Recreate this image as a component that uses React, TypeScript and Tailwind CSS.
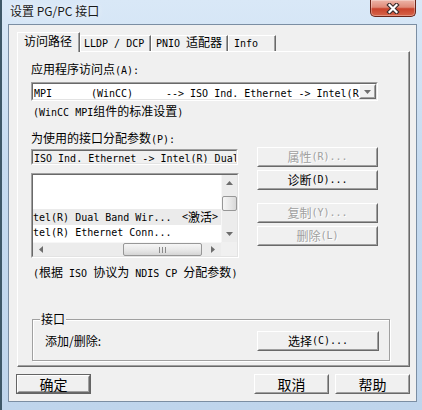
import React from "react";

const CJK = /[\u2E80-\u9FFF\uFF00-\uFFEF\u3000-\u303F]/;

function T({ s }: { s: string }) {
  const parts = s.split(/([\u2E80-\u9FFF\uFF00-\uFFEF\u3000-\u303F]+)/).filter(Boolean);
  return (
    <>
      {parts.map((p, i) =>
        CJK.test(p) ? (
          <span key={i} className="font-['Noto_Sans_CJK_SC',sans-serif] text-[12px]">
            {p}
          </span>
        ) : (
          <span key={i} className="font-['DejaVu_Sans_Mono',monospace] text-[10px] whitespace-pre">
            {p}
          </span>
        )
      )}
    </>
  );
}

function Btn({
  children,
  className = "",
  disabled = false,
  def = false,
}: {
  children: React.ReactNode;
  className?: string;
  disabled?: boolean;
  def?: boolean;
}) {
  const body = (
    <div className="h-full w-full border border-t-white border-l-white border-r-[#696969] border-b-[#696969]">
      <div
        className={
          "h-full w-full border border-t-[#f0f0f0] border-l-[#f0f0f0] border-r-[#a0a0a0] border-b-[#a0a0a0] flex items-center justify-center bg-[#f0f0f0] " +
          (disabled ? "text-[#a0a0a0] [text-shadow:1px_1px_0_#ffffff]" : "text-black")
        }
      >
        {children}
      </div>
    </div>
  );
  if (def) {
    return <div className={"border border-[#646464] " + className}>{body}</div>;
  }
  return <div className={className}>{body}</div>;
}

function Sunken({ className = "", innerClass = "", children }: { className?: string; innerClass?: string; children?: React.ReactNode }) {
  return (
    <div className={"border border-t-[#a0a0a0] border-l-[#a0a0a0] border-r-white border-b-white " + className}>
      <div className={"h-full w-full border border-t-[#696969] border-l-[#696969] border-r-[#e3e3e3] border-b-[#e3e3e3] " + innerClass}>
        {children}
      </div>
    </div>
  );
}

function Arrow({ dir }: { dir: "up" | "down" | "left" | "right" }) {
  const pts =
    dir === "up"
      ? "0,4 7,4 3.5,0"
      : dir === "down"
      ? "0,0 7,0 3.5,4"
      : dir === "left"
      ? "4,0 4,7 0,3.5"
      : "0,0 0,7 4,3.5";
  const w = dir === "up" || dir === "down" ? 7 : 4;
  const h = dir === "up" || dir === "down" ? 4 : 7;
  return (
    <svg width={w} height={h} viewBox={`0 0 ${w} ${h}`}>
      <polygon points={pts} fill="#6d6d6d" />
    </svg>
  );
}

export default function App() {
  return (
    <div className="w-[422px] h-[410px] overflow-hidden border-l-2 border-l-[#3e5868] bg-[linear-gradient(180deg,#d9e8f7_0%,#c6dbf0_40%,#bfd5ec_100%)] flex flex-col font-['Noto_Sans_CJK_SC',sans-serif] text-[12px] leading-[14px] text-black">
      {/* Title bar */}
      <div className="h-[24px] flex items-start shrink-0">
        <div className="ml-[8px] mt-[3px] text-[12px] leading-[16px] text-[#1a1a1a] [text-shadow:0_0_6px_#ffffff]">
          设置 PG/PC 接口
        </div>
        <div className="ml-auto mr-[6px] w-[46px] h-[17px] rounded-b-[5px] border border-t-0 border-[#6a2418] bg-[linear-gradient(180deg,#edb5a8_0%,#df8a78_45%,#c9432c_55%,#d7654a_100%)] shadow-[inset_0_0_0_1px_rgba(255,255,255,0.3)] flex items-center justify-center">
          <svg width="14" height="11" viewBox="0 0 14 11">
            <path d="M3.5 2 L10.5 9 M10.5 2 L3.5 9" stroke="#3b2b2b" strokeWidth="4.4" strokeLinecap="square" />
            <path d="M3.5 2 L10.5 9 M10.5 2 L3.5 9" stroke="#ffffff" strokeWidth="2.2" strokeLinecap="square" />
          </svg>
        </div>
      </div>

      {/* Client area */}
      <div className="ml-[6px] mr-[5px] h-[378px] shrink-0 border border-[#7b8ea3] bg-[#f0f0f0] flex flex-col">
        <div className="ml-[8px] mr-[6px] mt-[7px] flex flex-col">
          {/* Tabs */}
          <div className="flex items-end h-[19px]">
            <div className="relative z-10 -mb-[1px] w-[63px] h-[20px] bg-[#f0f0f0] border-t border-l border-t-white border-l-white border-r border-r-[#696969] shadow-[inset_-1px_0_0_#a0a0a0] pl-[6px] pt-[2px] leading-[12px]">
              访问路径
            </div>
            <div className="w-[71px] h-[16px] border-t border-l border-t-white border-l-white border-r border-r-[#696969] shadow-[inset_-1px_0_0_#a0a0a0] pl-[3px] leading-[12px]">
              <T s="LLDP / DCP" />
            </div>
            <div className="w-[77px] h-[16px] border-t border-l border-t-white border-l-white border-r border-r-[#696969] shadow-[inset_-1px_0_0_#a0a0a0] pl-[4px] leading-[12px]">
              <T s="PNIO 适配器" />
            </div>
            <div className="w-[48px] h-[16px] border-t border-l border-t-white border-l-white border-r border-r-[#696969] shadow-[inset_-1px_0_0_#a0a0a0] pl-[5px] leading-[12px]">
              <T s="Info" />
            </div>
          </div>

          {/* Panel */}
          <div className="h-[316px] border-t border-l border-t-white border-l-white border-r border-b border-r-[#696969] border-b-[#696969] shadow-[inset_-1px_-1px_0_#a0a0a0] pl-[13px] flex flex-col">
            <div className="mt-[10px]">
              <T s="应用程序访问点(A):" />
            </div>
            <Sunken className="mt-[4px] w-[347px] h-[19px] bg-white" innerClass="flex">
              <div className="flex-1 overflow-hidden whitespace-nowrap pl-[1px] leading-[15px] flex">
                <span className="w-[57px] shrink-0">
                  <T s="MPI" />
                </span>
                <span className="w-[75px] shrink-0">
                  <T s="(WinCC)" />
                </span>
                <span className="shrink-0">
                  <T s="--> ISO Ind. Ethernet -> Intel(R) Dual Band Wireless" />
                </span>
              </div>
              <Btn className="w-[17px] h-full shrink-0">
                <Arrow dir="down" />
              </Btn>
            </Sunken>
            <div className="mt-[3px] ml-[2px]">
              <T s="(WinCC MPI组件的标准设置)" />
            </div>
            <div className="mt-[11px]">
              <T s="为使用的接口分配参数(P):" />
            </div>

            <div className="flex">
              <div className="flex flex-col w-[208px] pt-[2px]">
                <Sunken className="w-[207px] h-[16px] bg-[#f0f0f0]" innerClass="overflow-hidden whitespace-nowrap pl-[1px] leading-[12px]">
                  <T s="ISO Ind. Ethernet -> Intel(R) Dual Band Wireless" />
                </Sunken>
                <Sunken className="mt-[8px] w-[208px] h-[85px] bg-white" innerClass="flex flex-col">
                  <div className="flex h-[67px]">
                    <div className="w-[188px] bg-white overflow-hidden flex flex-col">
                      <div className="h-[34px] shrink-0" />
                      <div className="h-[16px] shrink-0 bg-[#ebebeb] flex items-center whitespace-nowrap">
                        <span className="w-[149px] shrink-0">
                          <T s="tel(R) Dual Band Wir..." />
                        </span>
                        <T s="<激活>" />
                      </div>
                      <div className="h-[16px] shrink-0 flex items-center whitespace-nowrap">
                        <T s="tel(R) Ethernet Conn..." />
                      </div>
                    </div>
                    {/* vertical scrollbar */}
                    <div className="w-[16px] h-full bg-[#ececec] border-l border-l-[#f7f7f7] flex flex-col items-center">
                      <div className="h-[16px] flex items-center justify-center">
                        <Arrow dir="up" />
                      </div>
                      <div className="mt-[5px] w-[15px] h-[15px] rounded-[2px] border border-[#979797] bg-[linear-gradient(90deg,#f6f6f6_0%,#e6e6e6_60%,#d8d8d8_100%)]" />
                      <div className="mt-auto h-[16px] flex items-center justify-center">
                        <Arrow dir="down" />
                      </div>
                    </div>
                  </div>
                  <div className="flex h-[14px]">
                    <div className="w-[188px] h-full bg-[#ececec] border-t border-t-[#f7f7f7] flex items-center">
                      <div className="w-[16px] flex items-center justify-center">
                        <Arrow dir="left" />
                      </div>
                      <div className="ml-[74px] w-[79px] h-[13px] rounded-[2px] border border-[#979797] bg-[linear-gradient(180deg,#f6f6f6_0%,#e6e6e6_60%,#d6d6d6_100%)] flex items-center justify-center gap-[2px]">
                        <div className="w-[1px] h-[6px] bg-[#8a8a8a]" />
                        <div className="w-[1px] h-[6px] bg-[#8a8a8a]" />
                        <div className="w-[1px] h-[6px] bg-[#8a8a8a]" />
                      </div>
                      <div className="ml-auto w-[16px] flex items-center justify-center">
                        <Arrow dir="right" />
                      </div>
                    </div>
                    <div className="w-[16px] h-full bg-[#f0f0f0]" />
                  </div>
                </Sunken>
                <div className="mt-[7px] ml-[2px]">
                  <T s="(根据 ISO 协议为 NDIS CP 分配参数)" />
                </div>
              </div>

              <div className="ml-[18px] flex flex-col">
                <Btn className="w-[121px] h-[20px]" disabled>
                  <T s="属性(R)..." />
                </Btn>
                <Btn className="mt-[3px] w-[121px] h-[20px]">
                  <T s="诊断(D)..." />
                </Btn>
                <Btn className="mt-[13px] w-[121px] h-[20px]" disabled>
                  <T s="复制(Y)..." />
                </Btn>
                <Btn className="mt-[3px] w-[121px] h-[20px]" disabled>
                  <T s="删除(L)" />
                </Btn>
              </div>
            </div>

            {/* Group box */}
            <div className="relative mt-[38px] ml-[1px] w-[358px] h-[42px] border border-[#a0a0a0] shadow-[inset_1px_1px_0_#ffffff,1px_1px_0_#ffffff] flex items-center pt-[1px]">
              <div className="absolute left-[7px] top-[-8px] px-[1px] bg-[#f0f0f0] leading-[14px]">接口</div>
              <div className="ml-[12px]">添加/删除:</div>
              <Btn className="ml-auto mr-[10px] w-[122px] h-[20px]">
                <T s="选择(C)..." />
              </Btn>
            </div>
          </div>
        </div>

        {/* Bottom buttons */}
        <div className="mt-[7px] flex pl-[7px] pr-[6px]">
          <Btn className="w-[75px] h-[20px] text-[14px]" def>
            <span className="text-[14px]">确定</span>
          </Btn>
          <Btn className="ml-auto w-[75px] h-[20px]">
            <span className="text-[14px]">取消</span>
          </Btn>
          <Btn className="ml-[6px] w-[75px] h-[20px]">
            <span className="text-[14px]">帮助</span>
          </Btn>
        </div>
      </div>
    </div>
  );
}
